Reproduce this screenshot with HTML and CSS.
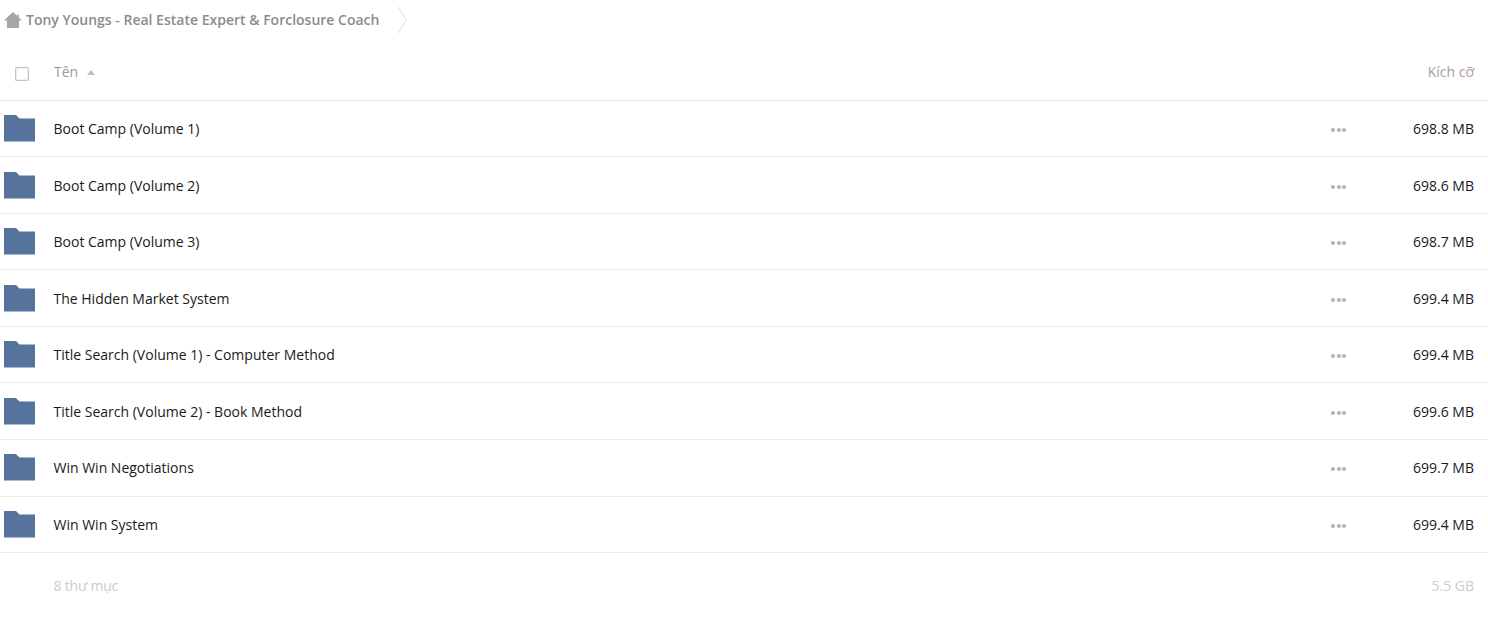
FILE: index.html
```html
<!DOCTYPE html>
<html lang="vi">
<head>
    <meta charset="UTF-8">
    <meta name="viewport" content="width=device-width, initial-scale=1.0">
    <title>Tony Youngs - Real Estate Expert &amp; Forclosure Coach</title>
    <link rel="stylesheet" href="styles.css">
</head>
<body>
    <div class="breadcrumb">
        <svg class="home-icon" width="18" height="16" viewBox="0 0 18 16"><path d="M9 0 L13.2 4 V2.5 H14.8 V5.5 L18 8.5 H15 V16 H3 V8.5 H0 Z" fill="#a6a6a6"/></svg>
        <a class="crumb-link">Tony Youngs - Real Estate Expert &amp; Forclosure Coach</a>
        <svg class="crumb-arrow" width="10" height="28" viewBox="0 0 10 28"><path d="M1 .5 L9 14 L1 27.5" fill="none" stroke="#e3e3e3"/></svg>
    </div>

    <div class="list-header">
        <span class="checkbox"></span>
        <span class="col-name">Tên <i class="sort-arrow"></i></span>
        <span class="col-size">Kích cỡ</span>
    </div>

    <div class="row">
        <svg class="folder" width="31" height="27" viewBox="0 0 31 27"><path d="M0 0 H12 L15.5 3.5 H31 V26.5 H0 Z" fill="#56739e"/></svg>
        <span class="row-name">Boot Camp (Volume 1)</span>
        <span class="dots"><i></i><i></i><i></i></span>
        <span class="row-size">698.8 MB</span>
    </div>
    <div class="row">
        <svg class="folder" width="31" height="27" viewBox="0 0 31 27"><path d="M0 0 H12 L15.5 3.5 H31 V26.5 H0 Z" fill="#56739e"/></svg>
        <span class="row-name">Boot Camp (Volume 2)</span>
        <span class="dots"><i></i><i></i><i></i></span>
        <span class="row-size">698.6 MB</span>
    </div>
    <div class="row">
        <svg class="folder" width="31" height="27" viewBox="0 0 31 27"><path d="M0 0 H12 L15.5 3.5 H31 V26.5 H0 Z" fill="#56739e"/></svg>
        <span class="row-name">Boot Camp (Volume 3)</span>
        <span class="dots"><i></i><i></i><i></i></span>
        <span class="row-size">698.7 MB</span>
    </div>
    <div class="row">
        <svg class="folder" width="31" height="27" viewBox="0 0 31 27"><path d="M0 0 H12 L15.5 3.5 H31 V26.5 H0 Z" fill="#56739e"/></svg>
        <span class="row-name">The Hidden Market System</span>
        <span class="dots"><i></i><i></i><i></i></span>
        <span class="row-size">699.4 MB</span>
    </div>
    <div class="row">
        <svg class="folder" width="31" height="27" viewBox="0 0 31 27"><path d="M0 0 H12 L15.5 3.5 H31 V26.5 H0 Z" fill="#56739e"/></svg>
        <span class="row-name">Title Search (Volume 1) - Computer Method</span>
        <span class="dots"><i></i><i></i><i></i></span>
        <span class="row-size">699.4 MB</span>
    </div>
    <div class="row">
        <svg class="folder" width="31" height="27" viewBox="0 0 31 27"><path d="M0 0 H12 L15.5 3.5 H31 V26.5 H0 Z" fill="#56739e"/></svg>
        <span class="row-name">Title Search (Volume 2) - Book Method</span>
        <span class="dots"><i></i><i></i><i></i></span>
        <span class="row-size">699.6 MB</span>
    </div>
    <div class="row">
        <svg class="folder" width="31" height="27" viewBox="0 0 31 27"><path d="M0 0 H12 L15.5 3.5 H31 V26.5 H0 Z" fill="#56739e"/></svg>
        <span class="row-name">Win Win Negotiations</span>
        <span class="dots"><i></i><i></i><i></i></span>
        <span class="row-size">699.7 MB</span>
    </div>
    <div class="row">
        <svg class="folder" width="31" height="27" viewBox="0 0 31 27"><path d="M0 0 H12 L15.5 3.5 H31 V26.5 H0 Z" fill="#56739e"/></svg>
        <span class="row-name">Win Win System</span>
        <span class="dots"><i></i><i></i><i></i></span>
        <span class="row-size">699.4 MB</span>
    </div>

    <div class="list-footer">
        <span class="footer-count">8 thư mục</span>
        <span>5.5 GB</span>
    </div>
</body>
</html>
```

FILE: styles.css
```css
body {
    font-family: "Open Sans", sans-serif;
    font-size: 14px;
    margin: 0;
    padding: 0;
    background-color: #ffffff;
    color: #1a1a1a;
}
.breadcrumb {
    display: flex;
    align-items: center;
    height: 38px;
    padding-left: 4px;
    padding-top: 1px;
    box-sizing: border-box;
}
.home-icon {
    margin-right: 4px;
}
.crumb-link {
    font-weight: 600;
    color: #8c8c8c;
}
.crumb-arrow {
    margin-left: 18px;
}
.list-header {
    display: flex;
    align-items: center;
    height: 62.7px;
    padding-top: 6px;
    padding-right: 14px;
    border-bottom: 1px solid #e9e9e9;
    box-sizing: border-box;
}
.checkbox {
    width: 12px;
    height: 12px;
    margin-left: 15px;
    margin-top: 4px;
    border: 1px solid #c6c6c6;
    border-radius: 1px;
    box-shadow: inset 0 0 0 1px #eeeeee;
}
.col-name {
    margin-left: 25px;
    color: #999999;
    flex: 1;
}
.sort-arrow {
    display: inline-block;
    width: 0;
    height: 0;
    margin-left: 5px;
    margin-bottom: 2px;
    border-left: 4.5px solid transparent;
    border-right: 4.5px solid transparent;
    border-bottom: 5px solid #bdbdbd;
}
.col-size {
    color: #a89c9c;
}
.row {
    display: flex;
    align-items: center;
    height: 56.55px;
    box-sizing: border-box;
    padding-left: 4px;
    padding-right: 14px;
    border-bottom: 1px solid #ececec;
}
.folder {
    margin-top: 0.5px;
}
.row-name {
    margin-left: 18.5px;
    flex: 1;
}
.dots {
    display: flex;
    gap: 1.5px;
    margin-top: 3px;
    margin-right: 28px;
}
.dots i {
    width: 4px;
    height: 4px;
    border-radius: 50%;
    background-color: #b3b3b3;
}
.row-size {
    width: 100px;
    text-align: right;
}
.list-footer {
    display: flex;
    justify-content: space-between;
    padding: 23px 14px 0 53.5px;
    color: #cccccc;
}
.footer-count {
    letter-spacing: -0.2px;
}
```
